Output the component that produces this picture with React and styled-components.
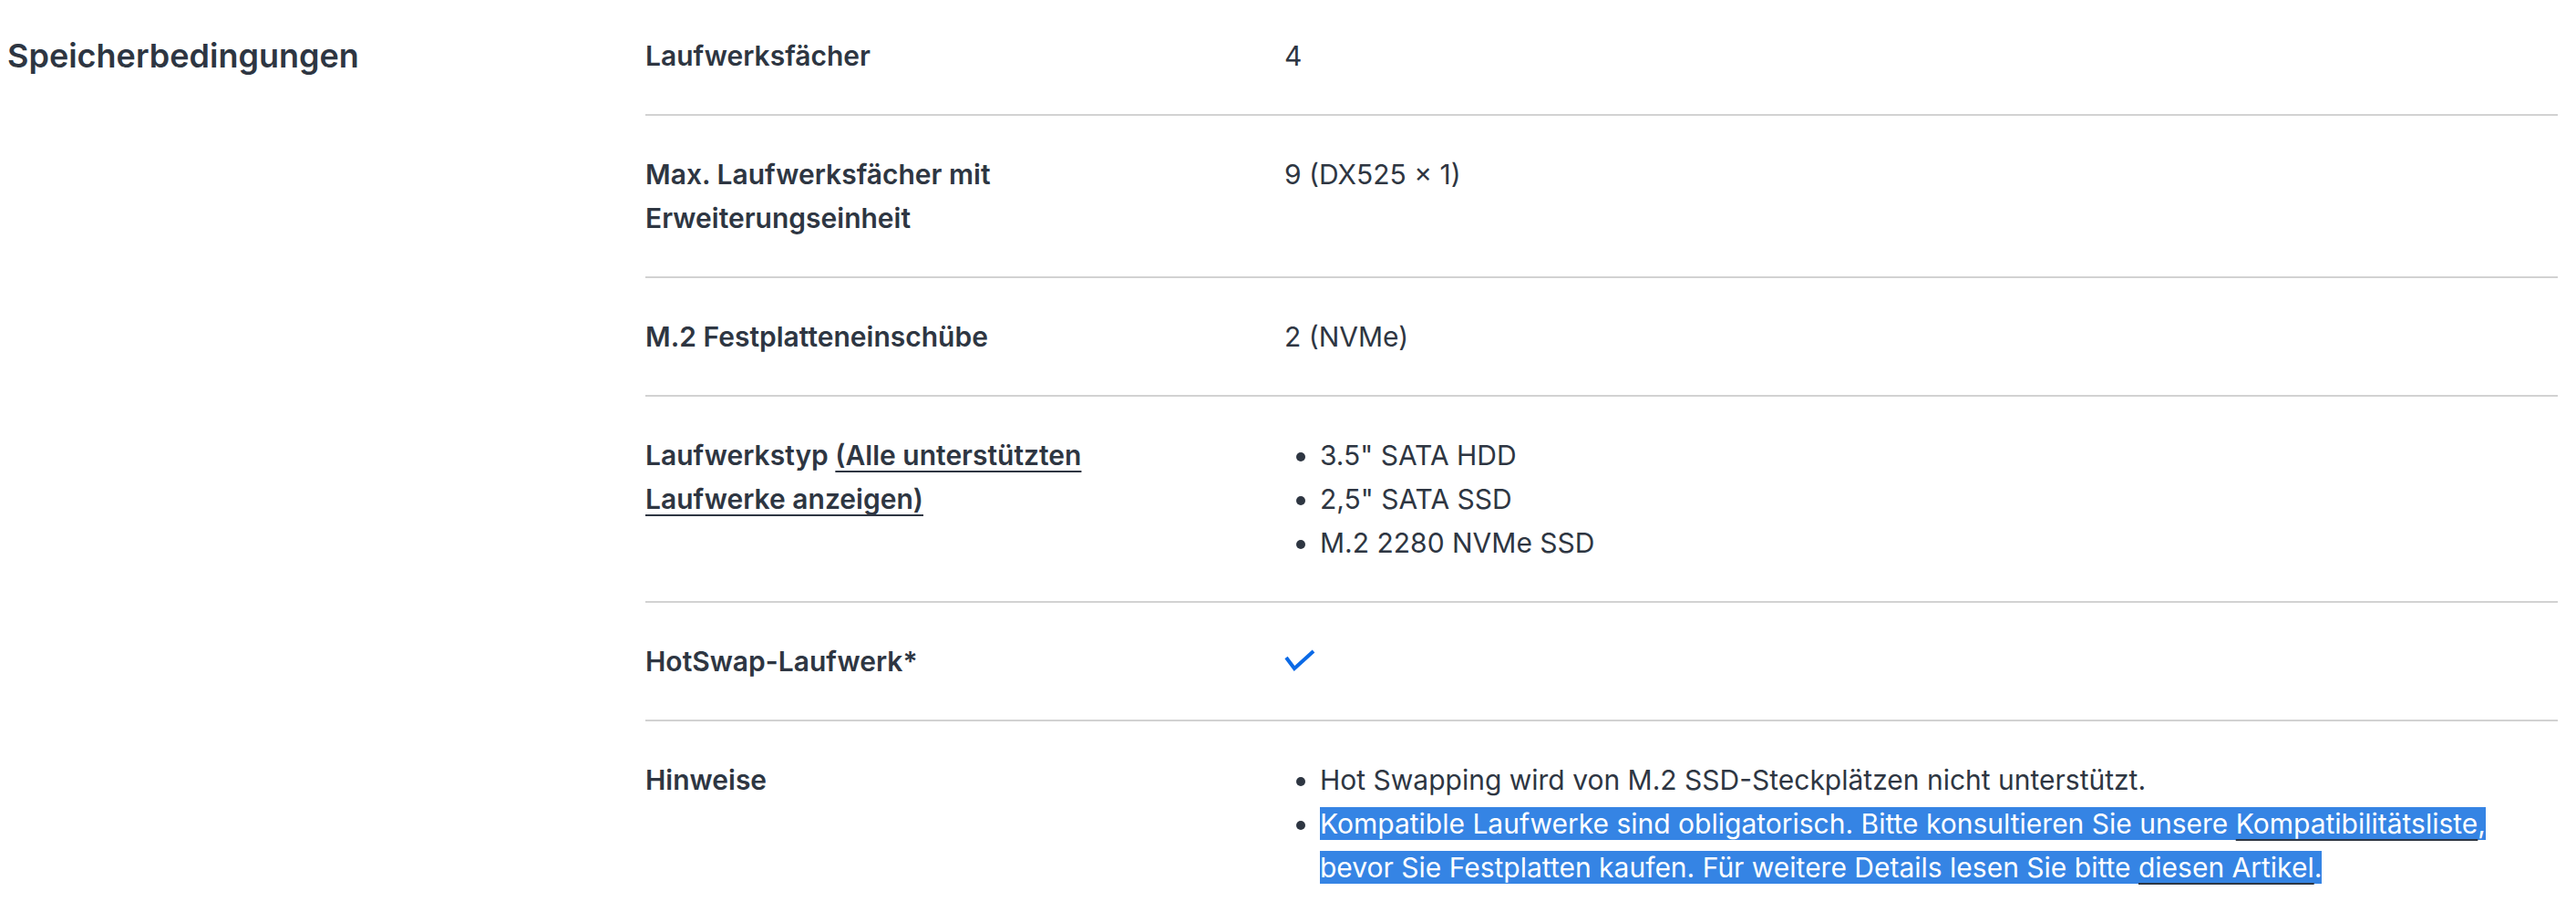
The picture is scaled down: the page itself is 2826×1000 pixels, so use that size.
import React from 'react';
import styled, { createGlobalStyle } from 'styled-components';

const GlobalStyle = createGlobalStyle`
  body {
    margin: 0;
    background: #ffffff;
    font-family: Inter, "Noto Sans", sans-serif;
    color: #2e3642;
  }
`

const Section = styled.section`
  display: grid;
  grid-template-columns: 700px 1fr;
  padding: 0 20px 0 8px;
`

const Heading = styled.h2`
  margin: 0;
  padding-top: 37px;
  font-size: 36px;
  line-height: 48px;
  font-weight: 600;
`

const Table = styled.div`
  display: flex;
  flex-direction: column;
`

const Row = styled.div`
  display: grid;
  grid-template-columns: 701px 1fr;
  padding: 40px 0;
  border-bottom: 2px solid #d2d2d2;
  font-size: 30px;
  line-height: 48px;

  &:first-child {
    padding-top: 37px;
  }
`

const Label = styled.div`
  font-weight: 600;
  padding-right: 80px;
`

const Value = styled.div`
  font-weight: 400;
`

const List = styled.ul`
  margin: 0;
  padding-left: 39px;
  list-style: disc;
`

const Link = styled.a`
  color: ${(p) => (p.$light ? '#ffffff' : 'inherit')};
  text-decoration: underline;
  text-decoration-color: #2e3642;
  text-decoration-thickness: 2px;
  text-underline-offset: 6px;
`

const Selected = styled.span`
  background: #3584e4;
  color: #ffffff;
`

const Check = styled.svg`
  display: block;
  width: 34px;
  height: 26px;
  margin-top: 11px;
`

function CheckIcon() {
  return (
    <Check viewBox="0 0 34 26" fill="none">
      <polyline
        points="2,8 11,20 32,1"
        stroke="#0b6ae6"
        strokeWidth="4"
        strokeLinecap="butt"
        strokeLinejoin="miter"
        transform="translate(0,1)"
      />
    </Check>
  )
}

function App() {
  return (
    <>
      <GlobalStyle />
      <Section>
        <Heading>Speicherbedingungen</Heading>
        <Table>
          <Row>
            <Label>Laufwerksfächer</Label>
            <Value>4</Value>
          </Row>
          <Row>
            <Label>Max. Laufwerksfächer mit Erweiterungseinheit</Label>
            <Value>9 (DX525 × 1)</Value>
          </Row>
          <Row>
            <Label>M.2 Festplatteneinschübe</Label>
            <Value>2 (NVMe)</Value>
          </Row>
          <Row>
            <Label>
              Laufwerkstyp <Link href="/">(Alle unterstützten Laufwerke anzeigen)</Link>
            </Label>
            <Value>
              <List>
                <li>3.5" SATA HDD</li>
                <li>2,5" SATA SSD</li>
                <li>M.2 2280 NVMe SSD</li>
              </List>
            </Value>
          </Row>
          <Row>
            <Label>HotSwap-Laufwerk*</Label>
            <Value>
              <CheckIcon />
            </Value>
          </Row>
          <Row>
            <Label>Hinweise</Label>
            <Value>
              <List>
                <li>Hot Swapping wird von M.2 SSD-Steckplätzen nicht unterstützt.</li>
                <li>
                  <Selected>
                    Kompatible Laufwerke sind obligatorisch. Bitte konsultieren Sie unsere{' '}
                    <Link href="/" $light>Kompatibilitätsliste</Link>, bevor Sie Festplatten kaufen. Für
                    weitere Details lesen Sie bitte <Link href="/" $light>diesen Artikel</Link>.
                  </Selected>
                </li>
              </List>
            </Value>
          </Row>
        </Table>
      </Section>
    </>
  )
}

export default App
